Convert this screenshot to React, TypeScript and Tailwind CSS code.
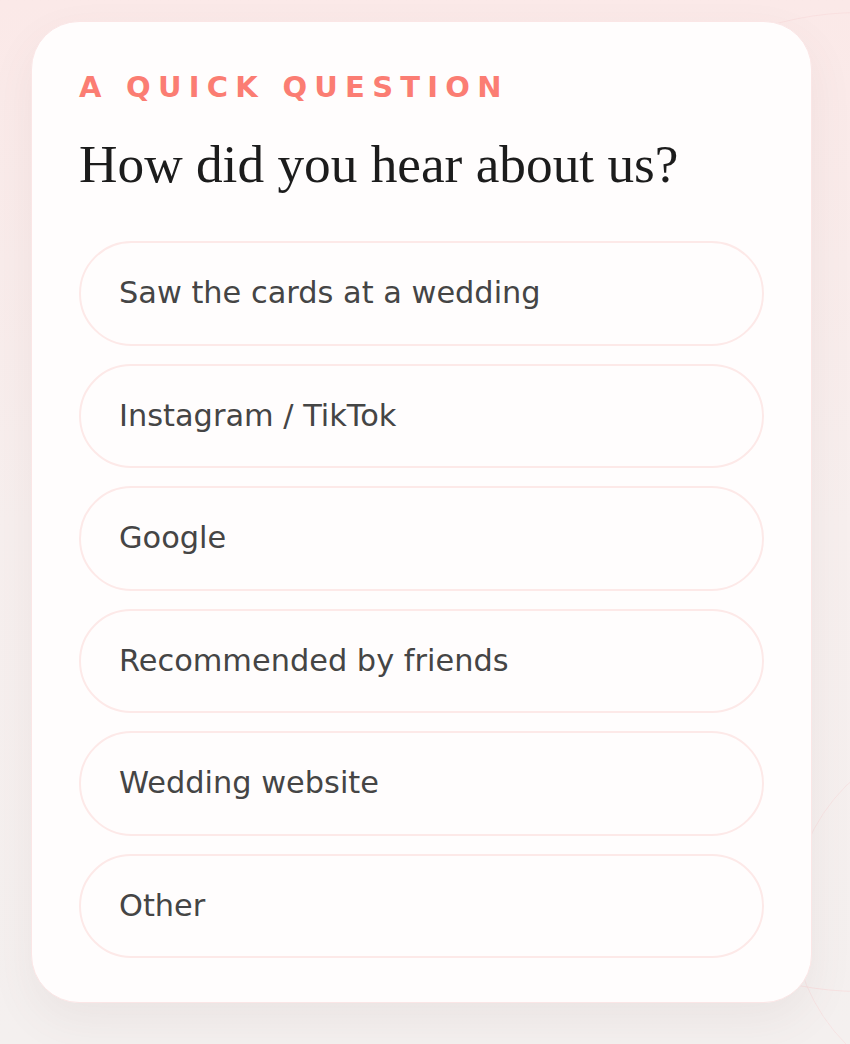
import React from 'react'

const options = [
  'Saw the cards at a wedding',
  'Instagram / TikTok',
  'Google',
  'Recommended by friends',
  'Wedding website',
  'Other'
]

const OptionPill: React.FC<{ label: string }> = ({ label }) => (
  <button
    type="button"
    className="flex h-[104.5px] w-full items-center rounded-full border-2 border-[#fde9e8] bg-[#fffdfd] px-[38px] text-left text-[30.4px] leading-[36px] text-[#454545]"
  >
    {label}
  </button>
)

export default function App() {
  return (
    <div className="relative min-h-[1044px] overflow-hidden bg-gradient-to-b from-[#fbe9e8] via-[#f7efee] to-[#f4f0ef] pt-[21px] font-['DejaVu_Sans',sans-serif]">
      {/* soft rings behind the card */}
      <div className="absolute left-[540px] top-[12px] h-[980px] w-[640px] rounded-full border border-[#f8dcdc]/70" />
      <div className="absolute left-[792px] top-[732px] h-[366px] w-[366px] rounded-full border border-[#f6dede]/70" />

      <div className="relative ml-[31px] w-[781px] rounded-[48px] border border-[#fbe6e6] bg-[#fffdfd] px-[47px] pb-[44px] pt-[48px] shadow-[0_18px_46px_rgba(120,80,80,0.07)]">
        <p className="text-[29px] font-bold leading-[34px] tracking-[0.25em] text-[#fb7d73]">
          A QUICK QUESTION
        </p>
        <h1 className="mt-[29px] font-['Liberation_Serif',serif] text-[53.3px] leading-[64px] text-[#1c1c1c]">
          How did you hear about us?
        </h1>
        <div className="mt-[44px] flex flex-col gap-[18px]">
          {options.map((label) => (
            <OptionPill key={label} label={label} />
          ))}
        </div>
      </div>
    </div>
  )
}
